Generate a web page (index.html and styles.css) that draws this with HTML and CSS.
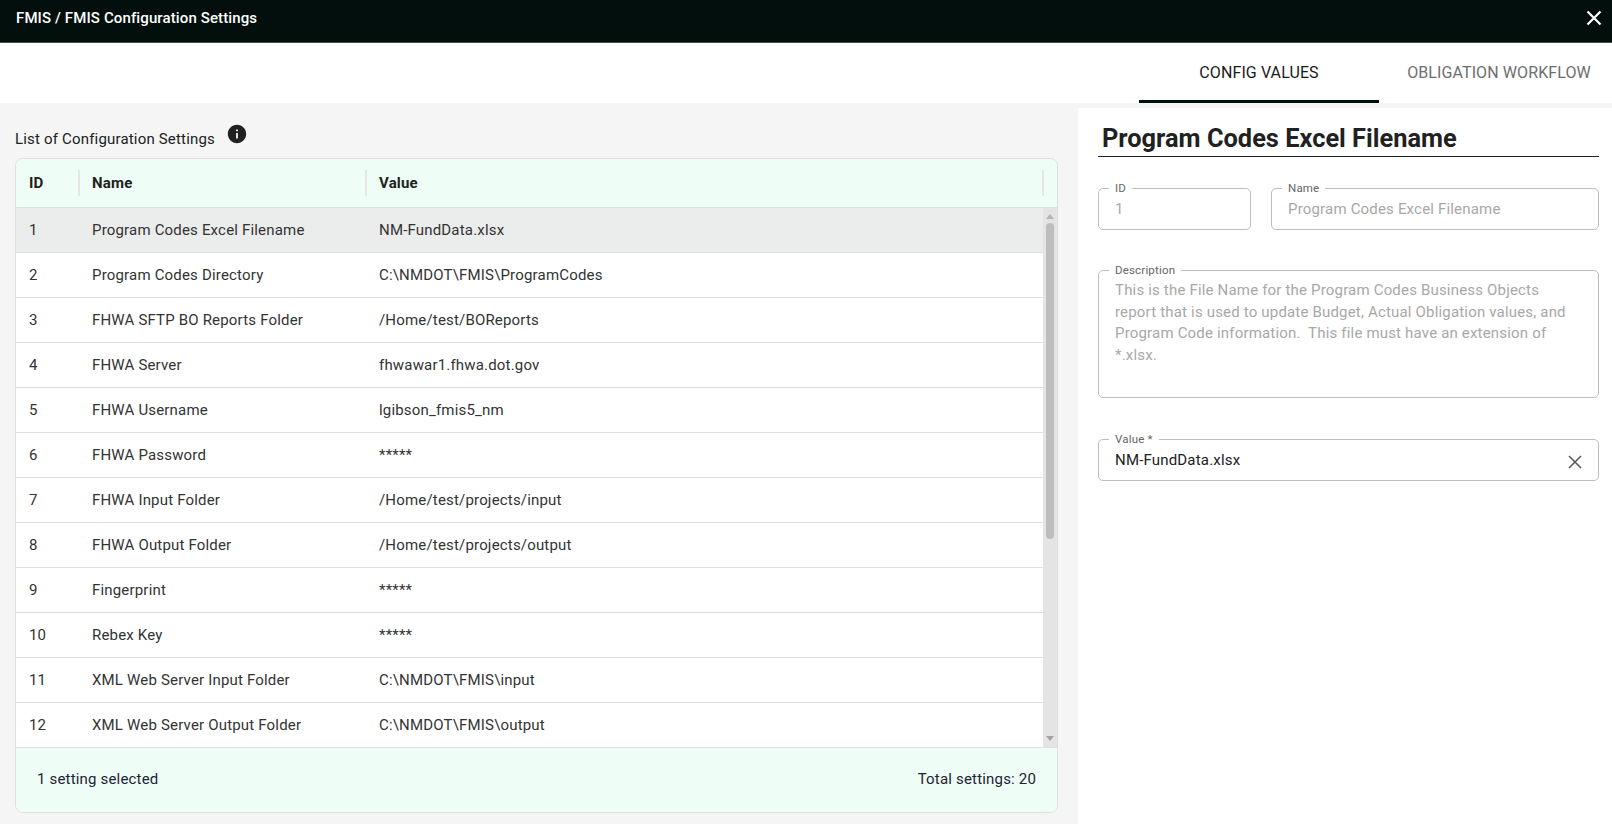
FILE: index.html
```html
<!DOCTYPE html>
<html lang="en">

<head>
  <meta charset="UTF-8" />
  <title>FMIS Configuration Settings</title>
  <link rel="stylesheet" href="styles.css">
</head>

<body>
  <header class="topbar">
    <span class="topbar-title">FMIS / FMIS Configuration Settings</span>
    <svg class="topbar-close" viewBox="0 0 24 24">
      <path d="M6 6 18 18M18 6 6 18" />
    </svg>
  </header>

  <nav class="tabs">
    <div class="tab tab-active">CONFIG VALUES</div>
    <div class="tab">OBLIGATION WORKFLOW</div>
  </nav>

  <main class="content">
    <section class="list-panel">
      <div class="list-title">
        <span>List of Configuration Settings</span>
        <svg class="info-icon" viewBox="0 0 24 24">
          <path d="M12 2C6.48 2 2 6.48 2 12s4.48 10 10 10 10-4.48 10-10S17.52 2 12 2zm1 15h-2v-6h2v6zm0-8h-2V7h2v2z" />
        </svg>
      </div>

      <div class="grid">
        <div class="grid-head">
          <div class="col-id head-cell">ID</div>
          <div class="col-name head-cell">Name</div>
          <div class="col-value head-cell">Value</div>
        </div>

        <div class="grid-body">
          <div class="rows">
            <div class="row row-selected"><div class="col-id">1</div><div class="col-name">Program Codes Excel Filename</div><div class="col-value">NM-FundData.xlsx</div></div>
            <div class="row"><div class="col-id">2</div><div class="col-name">Program Codes Directory</div><div class="col-value">C:\NMDOT\FMIS\ProgramCodes</div></div>
            <div class="row"><div class="col-id">3</div><div class="col-name">FHWA SFTP BO Reports Folder</div><div class="col-value">/Home/test/BOReports</div></div>
            <div class="row"><div class="col-id">4</div><div class="col-name">FHWA Server</div><div class="col-value">fhwawar1.fhwa.dot.gov</div></div>
            <div class="row"><div class="col-id">5</div><div class="col-name">FHWA Username</div><div class="col-value">lgibson_fmis5_nm</div></div>
            <div class="row"><div class="col-id">6</div><div class="col-name">FHWA Password</div><div class="col-value">*****</div></div>
            <div class="row"><div class="col-id">7</div><div class="col-name">FHWA Input Folder</div><div class="col-value">/Home/test/projects/input</div></div>
            <div class="row"><div class="col-id">8</div><div class="col-name">FHWA Output Folder</div><div class="col-value">/Home/test/projects/output</div></div>
            <div class="row"><div class="col-id">9</div><div class="col-name">Fingerprint</div><div class="col-value">*****</div></div>
            <div class="row"><div class="col-id">10</div><div class="col-name">Rebex Key</div><div class="col-value">*****</div></div>
            <div class="row"><div class="col-id">11</div><div class="col-name">XML Web Server Input Folder</div><div class="col-value">C:\NMDOT\FMIS\input</div></div>
            <div class="row"><div class="col-id">12</div><div class="col-name">XML Web Server Output Folder</div><div class="col-value">C:\NMDOT\FMIS\output</div></div>
          </div>
          <div class="scrollbar">
            <div class="scroll-up"></div>
            <div class="scroll-thumb"></div>
            <div class="scroll-down"></div>
          </div>
        </div>

        <div class="grid-foot">
          <span>1 setting selected</span>
          <span>Total settings: 20</span>
        </div>
      </div>
    </section>

    <section class="detail-panel">
      <h2 class="detail-title">Program Codes Excel Filename</h2>

      <div class="field-row">
        <fieldset class="field field-id">
          <legend>ID</legend>
          <div class="field-text muted">1</div>
        </fieldset>
        <fieldset class="field field-name">
          <legend>Name</legend>
          <div class="field-text muted">Program Codes Excel Filename</div>
        </fieldset>
      </div>

      <fieldset class="field field-desc">
        <legend>Description</legend>
        <div class="desc-text muted">This is the File Name for the Program Codes Business Objects report that is used to update Budget, Actual Obligation values, and Program Code information.&nbsp; This file must have an extension of *.xlsx.</div>
      </fieldset>

      <fieldset class="field field-value">
        <legend>Value *</legend>
        <div class="field-text">NM-FundData.xlsx</div>
        <svg class="clear-icon" viewBox="0 0 24 24">
          <path d="M6 6 18 18M18 6 6 18" />
        </svg>
      </fieldset>
    </section>
  </main>
</body>

</html>
```

FILE: styles.css
```css
* {
  box-sizing: border-box;
  margin: 0;
  padding: 0;
}

html,
body {
  height: 100%;
}

body {
  display: flex;
  flex-direction: column;
  overflow: hidden;
  font-family: Roboto, "Liberation Sans", sans-serif;
  font-size: 15px;
  letter-spacing: 0.18px;
  color: #212121;
  background: #f5f5f5;
}

/* Barra superior */
.topbar {
  display: flex;
  flex: none;
  align-items: center;
  justify-content: space-between;
  height: 43px;
  padding: 0 5px 6px 16px;
  color: white;
  font-weight: 500;
  letter-spacing: 0.12px;
  background: #020f0d;
  border-bottom: 1px solid #4a4f4e;
}

.topbar-close {
  width: 26px;
  height: 26px;
  fill: none;
  stroke: white;
  stroke-width: 2;
}

/* Abas */
.tabs {
  display: flex;
  flex: none;
  justify-content: flex-end;
  height: 60px;
  margin-right: -7px;
  background: white;
}

.tab {
  display: flex;
  align-items: flex-start;
  justify-content: center;
  width: 240px;
  padding-top: 20px;
  color: #6e6e6e;
  font-size: 16px;
  letter-spacing: 0.1px;
}

.tab-active {
  color: #1a1a1a;
  border-bottom: 3px solid #020f0d;
}

.content {
  display: flex;
  flex: 1;
  min-height: 0;
}

/* Lista */
.list-panel {
  width: 1078px;
  padding: 18px 20px 11px 15px;
  display: flex;
  flex-direction: column;
}

.list-title {
  display: flex;
  align-items: flex-start;
  flex: none;
  gap: 11px;
  height: 37px;
  padding-top: 9px;
}

.info-icon {
  width: 22px;
  height: 22px;
  margin-top: -7px;
  fill: #212121;
}

.grid {
  display: flex;
  flex-direction: column;
  flex: 1;
  min-height: 0;
  overflow: hidden;
  border: 1px solid #dedfde;
  border-radius: 8px;
  background: white;
}

.grid-head {
  display: flex;
  flex: none;
  align-items: center;
  height: 49px;
  font-weight: 700;
  background: #eefdf5;
  border-bottom: 1px solid #dedfde;
}

.head-cell {
  display: flex;
  align-items: center;
  height: 26px;
  border-right: 2px solid #e3e8e5;
}

.col-id {
  flex: none;
  width: 64px;
  padding-left: 13px;
}

.col-name {
  flex: none;
  width: 287px;
  padding-left: 12px;
}

.col-value {
  flex: 1;
  padding-left: 12px;
}

.col-value.head-cell {
  margin-right: 13px;
}

.grid-body {
  display: flex;
  flex: 1;
  min-height: 0;
}

.rows {
  flex: 1;
  overflow: hidden;
}

.row {
  display: flex;
  align-items: center;
  height: 45px;
  padding-bottom: 1px;
  color: #333;
  border-bottom: 1px solid #dedfde;
}

.row:last-child {
  border-bottom: none;
}

.row-selected {
  background: #ebecec;
}

.scrollbar {
  display: flex;
  flex: none;
  flex-direction: column;
  align-items: center;
  width: 14px;
  background: #e4e4e4;
}

.scroll-up,
.scroll-down {
  flex: none;
  width: 0;
  height: 0;
  border-left: 4px solid transparent;
  border-right: 4px solid transparent;
}

.scroll-up {
  margin-top: 6px;
  border-bottom: 5px solid #b5b5b5;
}

.scroll-down {
  margin-top: auto;
  margin-bottom: 6px;
  border-top: 5px solid #a3a3a3;
}

.scroll-thumb {
  flex: none;
  width: 8px;
  height: 316px;
  margin-top: 4px;
  background: #bdbdbd;
  border-radius: 4px;
}

.grid-foot {
  display: flex;
  flex: none;
  align-items: center;
  justify-content: space-between;
  height: 65px;
  padding: 0 21px 3px;
  color: #1d2433;
  background: #eefdf5;
  border-top: 1px solid #dedfde;
}

/* Detalhe */
.detail-panel {
  flex: 1;
  margin-top: 5px;
  padding: 0 13px 0 20px;
  background: white;
}

.detail-title {
  height: 49px;
  padding: 12px 0 0 4px;
  font-size: 25.4px;
  font-weight: 700;
  line-height: 36px;
  letter-spacing: 0;
  border-bottom: 1px solid #212121;
}

.field {
  position: relative;
  border: 1px solid #bdbdbd;
  border-radius: 5px;
  padding: 0 16px;
}

.field legend {
  margin-left: -6px;
  padding: 0 6px;
  color: #666;
  font-size: 11.5px;
  line-height: 11px;
}

.field-row {
  display: flex;
  gap: 20px;
  margin-top: 26px;
}

.field-id {
  flex: none;
  width: 153px;
  height: 47px;
}

.field-name {
  flex: 1;
  height: 47px;
}

.field-text {
  line-height: 30px;
  height: 30px;
}

.muted {
  color: #a8a8a8;
}

.field-desc {
  height: 133px;
  margin-top: 35px;
}

.desc-text {
  line-height: 21.7px;
  padding-top: 4px;
  padding-right: 8px;
}

.field-value {
  height: 47px;
  margin-top: 36px;
}

.clear-icon {
  position: absolute;
  top: 5px;
  right: 11px;
  width: 24px;
  height: 24px;
  fill: none;
  stroke: #555;
  stroke-width: 1.5;
}
```
